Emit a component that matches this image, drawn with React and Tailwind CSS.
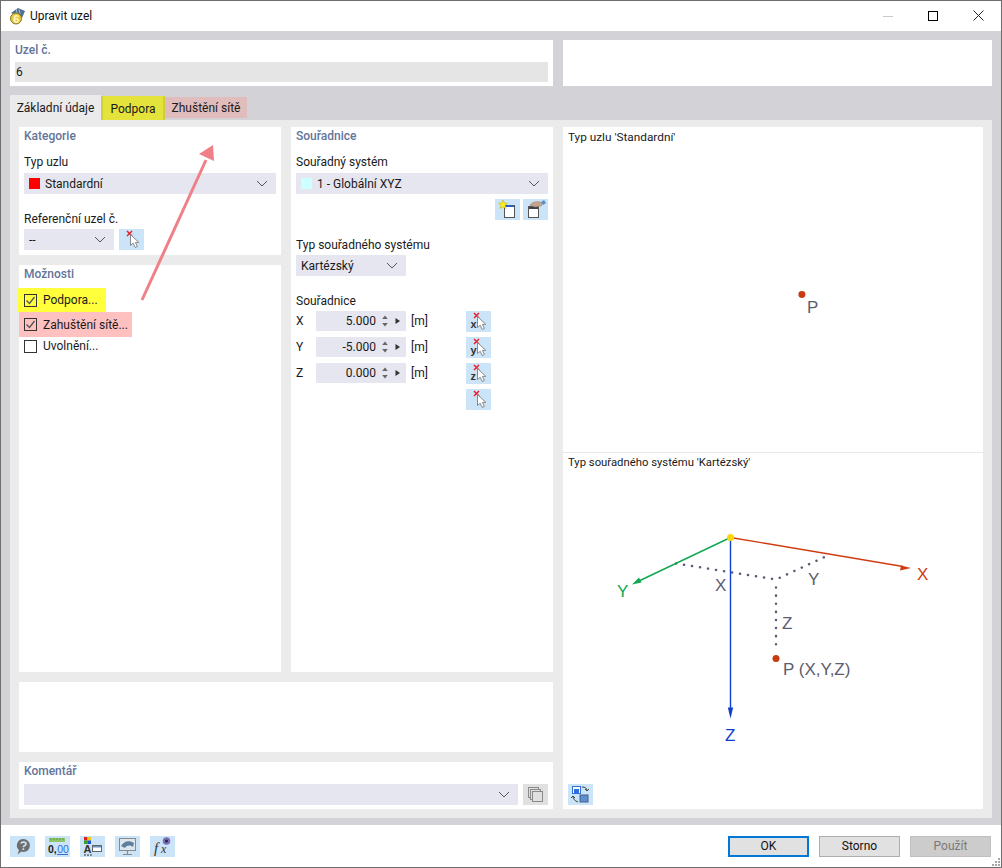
const FONT = "font-['Roboto','Noto_Sans',sans-serif]"

function Chevron({ className = "" }) {
   return (
      <svg width="12" height="7" viewBox="0 0 12 7" className={className}>
         <path d="M1 1l5 5 5-5" fill="none" stroke="#555" strokeWidth="1" />
      </svg>
   )
}

function Title({ children }) {
   return <div className="text-[12px] leading-[16px] font-medium text-[#64749a]">{children}</div>
}

function Label({ children, className = "" }) {
   return <div className={`text-[12px] leading-[16px] text-[#1a1a1a] ${className}`}>{children}</div>
}

function Select({ children, className = "" }) {
   return (
      <div className={`flex h-[21px] items-center justify-between bg-[#e6e6f0] pr-[8px] pl-[5px] text-[12px] text-[#1a1a1a] ${className}`}>
         <div className="flex items-center">{children}</div>
         <Chevron />
      </div>
   )
}

function IconBtn({ children, className = "", gray = false }) {
   return (
      <div className={`flex h-[21px] w-[25px] shrink-0 items-center justify-center ${gray ? "bg-[#e0e0e0]" : "bg-[#cce4f7]"} ${className}`}>
         {children}
      </div>
   )
}

// red cross with the white picking cursor, optional axis letter beside it
function PickIcon({ letter }) {
   return (
      <svg width="25" height="21" viewBox="0 0 25 21">
         <path d="M8 2l5 5M13 2l-5 5" stroke="#e8202c" strokeWidth="1.500" />
         <path d="M11.500 5.500v11l2.700-2.300 2 4.300 2.200-1-2-4.100h3.400z" fill="#fff" stroke="#8a8a8a" strokeWidth="1" />
         {letter && (
            <text x="4.500" y="17" fontSize="11" fontWeight="700" fill="#333" fontFamily="Liberation Sans">
               {letter}
            </text>
         )}
      </svg>
   )
}

function NewWindowIcon() {
   return (
      <svg width="25" height="21" viewBox="0 0 25 21">
         <rect x="9.500" y="6.500" width="10" height="12" fill="#fff" stroke="#555" />
         <rect x="10" y="6" width="9" height="2" fill="#2a5fc0" />
         <path d="M8 1l1.300 3 3.200.3-2.400 2.100.8 3.100L8 7.900 5.100 9.500l.8-3.100-2.400-2.100 3.200-.3z" fill="#ffee20" stroke="#b8a800" strokeWidth=".5" />
      </svg>
   )
}

function EditWindowIcon() {
   return (
      <svg width="25" height="21" viewBox="0 0 25 21">
         <rect x="5.500" y="7.500" width="10" height="11" fill="#fff" stroke="#555" />
         <rect x="6" y="8" width="9" height="2" fill="#444" />
         <path d="M7 6c2-3 6-4 10-3l3 1-2 3-6 1z" fill="#c9a48c" stroke="#8f7a70" strokeWidth=".5" />
         <path d="M18 3l3-2 2 3-3 2z" fill="#5b8fd0" />
      </svg>
   )
}

function Checkbox({ checked }) {
   return (
      <div className="flex h-[13px] w-[13px] shrink-0 items-center justify-center border border-[#333]">
         {checked && (
            <svg width="11" height="11" viewBox="0 0 11 11">
               <path d="M1.500 5.500l3 3 5-6.500" fill="none" stroke="#555" strokeWidth="1.300" />
            </svg>
         )}
      </div>
   )
}

function CoordRow({ axis, value, letter }) {
   return (
      <div className="flex h-[26px] text-[12px] text-[#1a1a1a]">
         <div className="w-[20px] leading-[21px]">{axis}</div>
         <div className="flex h-[20px] w-[90px] items-center bg-[#e6e6f0]">
            <div className="w-[60px] text-right">{value}</div>
            <svg width="30" height="20" viewBox="0 0 30 20">
               <path d="M9 4.500l2.800 3.500H6.200zM9 15.500L11.800 12H6.200z" fill="#666" />
               <path d="M19.500 7l4.500 3-4.500 3z" fill="#333" />
            </svg>
         </div>
         <div className="ml-[5px] w-[55px] leading-[21px]">[m]</div>
         <IconBtn>
            <PickIcon letter={letter} />
         </IconBtn>
      </div>
   )
}

function Footer() {
   return (
      <div className="relative flex h-[42px] shrink-0 items-center justify-between bg-white pr-[10px] pl-[9px] text-[12px]">
         <div className="flex gap-[10px]">
            <IconBtn>
               <svg width="25" height="21" viewBox="0 0 25 21">
                  <path d="M13.500 3a6.500 6.500 0 0 1 1.500 12.800c-1.500.3-3 0-3.500-.3L7.500 18.500l1.500-4.200A6.500 6.500 0 0 1 13.500 3z" fill="#6e6e6e" />
                  <path d="M11 7.500c.5-2 5-2 5 .4 0 1.800-2.700 1.600-2.700 3.400" fill="none" stroke="#cce4f7" strokeWidth="1.700" />
                  <rect x="12.500" y="12.300" width="1.700" height="1.700" fill="#cce4f7" />
               </svg>
            </IconBtn>
            <IconBtn>
               <svg width="25" height="21" viewBox="0 0 25 21">
                  <rect x="4" y="2" width="16" height="4" fill="#8cc76a" />
                  <path d="M6 2v2M9 2v2M12 2v2M15 2v2M18 2v2" stroke="#5f9a48" />
                  <text x="3" y="16.500" fontSize="10.500" fontFamily="Liberation Sans" fontWeight="700" fill="#222">0,</text>
                  <text x="12.200" y="16.500" fontSize="10.500" fontFamily="Liberation Sans" fill="#2f6fdc">00</text>
                  <path d="M12 18.500h11" stroke="#2f6fdc" />
               </svg>
            </IconBtn>
            <IconBtn>
               <svg width="25" height="21" viewBox="0 0 25 21">
                  <rect x="4" y="1" width="3.500" height="3.500" fill="#e02020" />
                  <rect x="7.500" y="1" width="3.500" height="3.500" fill="#e8c820" />
                  <rect x="4" y="4.500" width="3.500" height="3.500" fill="#30a030" />
                  <rect x="7.500" y="4.500" width="3.500" height="3.500" fill="#2050d0" />
                  <text x="3.500" y="17" fontSize="11" fontWeight="700" fontFamily="Liberation Sans" fill="#333">A</text>
                  <path d="M4 19h8" stroke="#333" strokeDasharray="2 1" />
                  <rect x="12.500" y="9.500" width="9" height="6" fill="#fff" stroke="#666" />
                  <rect x="13" y="10" width="8" height="1.500" fill="#6b8fc0" />
               </svg>
            </IconBtn>
            <IconBtn>
               <svg width="25" height="21" viewBox="0 0 25 21">
                  <rect x="4.500" y="2.500" width="16" height="12" fill="#dfe7ee" stroke="#8a8a8a" />
                  <path d="M6 10c3-5 8-6 13-3l-1 4c-3-2-6-2-8 1z" fill="#5f7f9f" />
                  <path d="M12.500 15v3M8 18.500h9" stroke="#8a8a8a" strokeWidth="1.200" />
               </svg>
            </IconBtn>
            <IconBtn>
               <svg width="25" height="21" viewBox="0 0 25 21">
                  <text x="4" y="17" fontSize="15" fontStyle="italic" fontFamily="Liberation Serif" fill="#333">f</text>
                  <text x="11" y="17" fontSize="12" fontStyle="italic" fontFamily="Liberation Serif" fill="#333">x</text>
                  <circle cx="16.500" cy="5" r="3.800" fill="#7a6fb0" />
                  <circle cx="16.500" cy="5" r="1.500" fill="#23235a" />
               </svg>
            </IconBtn>
         </div>
         <div className="flex gap-[10px]">
            <div className="flex h-[21px] w-[81px] items-center justify-center border-2 border-[#0078d7] bg-[#e1e1e1] text-[#111]">OK</div>
            <div className="flex h-[21px] w-[81px] items-center justify-center border border-[#adadad] bg-[#e1e1e1] text-[#111]">Storno</div>
            <div className="flex h-[21px] w-[81px] items-center justify-center border border-[#bfbfbf] bg-[#cccccc] text-[#7a7a7a]">Použít</div>
         </div>
         <svg width="10" height="10" viewBox="0 0 10 10" className="absolute right-0 bottom-0">
            <path d="M7 1h2v2H7zM4 4h2v2H4zM7 4h2v2H7zM1 7h2v2H1zM4 7h2v2H4zM7 7h2v2H7z" fill="#a8a8a8" />
         </svg>
      </div>
   )
}

export default function App() {
   return (
      <div className={`relative flex h-[868px] w-[1002px] flex-col overflow-hidden border border-[#6e6e6e] bg-white ${FONT}`}>
         {/* title bar */}
         <div className="flex h-[30px] shrink-0 items-center bg-white pl-[8px] text-[12px] text-[#111]">
            <svg width="17" height="18" viewBox="0 0 17 18">
               <path d="M2 6l7-5 7 3-3 7z" fill="#4f7096" />
               <path d="M7 2l1 4M10 2.500l1 4" stroke="#a8c0d8" />
               <circle cx="7" cy="11.500" r="5.500" fill="#e8c83c" stroke="#8a7420" />
               <text x="4.200" y="15.500" fontSize="11" fontWeight="700" fontFamily="Liberation Sans" fill="#fff8d0">6</text>
            </svg>
            <span className="ml-[4px]">Upravit uzel</span>
            <div className="ml-auto flex items-center">
               <div className="h-px w-[10px] bg-[#c8c8c8]" />
               <div className="ml-[35px] h-[10px] w-[10px] border border-black" />
               <svg width="11" height="11" viewBox="0 0 11 11" className="mt-[-1px] mr-[17px] ml-[35px]">
                  <path d="M.5.5l10 10M10.500.5l-10 10" stroke="#222" strokeWidth="1" />
               </svg>
            </div>
         </div>

         {/* dialog body */}
         <div className="flex min-h-0 flex-1 flex-col bg-[#d2d2d7] px-[9px] pt-[9px] pb-[7px]">
            <div className="flex h-[46px] shrink-0 gap-[10px]">
               <div className="w-[543px] bg-white px-[5px] pt-[2px]">
                  <Title>Uzel č.</Title>
                  <div className="mt-[4px] flex h-[20px] items-center bg-[#e5e5e5] pl-[1px] text-[12px] text-[#1a1a1a]">6</div>
               </div>
               <div className="flex-1 bg-white" />
            </div>

            {/* tabs */}
            <div className="mt-[9px] flex h-[25px] shrink-0 text-[12px] text-[#1a1a1a]">
               <div className="flex w-[91px] items-center justify-center bg-[#ebebeb]">Základní údaje</div>
               <div className="mt-px flex h-[25px] w-[64px] items-center justify-center border-x-2 border-x-[#cfcf3a] bg-[#e3e33c]">Podpora</div>
               <div className="mt-[2px] flex h-[21px] w-[82px] items-center justify-center bg-[#e0bcbc]">Zhuštění sítě</div>
            </div>

            <div className="flex min-h-0 flex-1 gap-[10px] bg-[#ebebeb] px-[9px] pt-[7px] pb-[9px]">
               <div className="flex w-[534px] flex-col gap-[10px]">
                  <div className="flex min-h-0 flex-1 gap-[10px]">
                     <div className="flex w-[262px] flex-col gap-[10px]">
                        <div className="h-[128px] bg-white px-[5px] pt-px">
                           <Title>Kategorie</Title>
                           <Label className="mt-[10px]">Typ uzlu</Label>
                           <Select className="mt-[3px]">
                              <div className="mr-[5px] h-[11px] w-[11px] bg-[#ff0000]" />
                              Standardní
                           </Select>
                           <Label className="mt-[17px]">Referenční uzel č.</Label>
                           <div className="mt-[2px] flex gap-[5px]">
                              <Select className="w-[90px]">--</Select>
                              <IconBtn>
                                 <PickIcon />
                              </IconBtn>
                           </div>
                        </div>
                        <div className="flex-1 bg-white pt-px">
                           <div className="px-[5px]">
                              <Title>Možnosti</Title>
                           </div>
                           <div className="mt-[6px] -ml-[2px] flex h-[24px] w-[89px] items-center gap-[6px] bg-[#ffff3c] pl-[7px] text-[12px] text-[#1a1a1a]">
                              <Checkbox checked />
                              Podpora...
                           </div>
                           <div className="flex h-[25px] w-[113px] items-center gap-[6px] bg-[#ffc0c0] pl-[5px] text-[12px] text-[#1a1a1a]">
                              <Checkbox checked />
                              Zahuštění sítě...
                           </div>
                           <div className="flex h-[18px] items-center gap-[6px] pl-[5px] text-[12px] text-[#1a1a1a]">
                              <Checkbox />
                              Uvolnění...
                           </div>
                        </div>
                     </div>

                     <div className="w-[262px] bg-white px-[5px] pt-px">
                        <Title>Souřadnice</Title>
                        <Label className="mt-[10px]">Souřadný systém</Label>
                        <Select className="mt-[3px]">
                           <div className="mr-[5px] h-[11px] w-[11px] bg-[#ccffff]" />
                           1 - Globální XYZ
                        </Select>
                        <div className="mt-[5px] flex justify-end gap-[3px]">
                           <IconBtn>
                              <NewWindowIcon />
                           </IconBtn>
                           <IconBtn>
                              <EditWindowIcon />
                           </IconBtn>
                        </div>
                        <Label className="mt-[17px]">Typ souřadného systému</Label>
                        <Select className="mt-[2px] w-[110px]">Kartézský</Select>
                        <Label className="mt-[17px]">Souřadnice</Label>
                        <div className="mt-[2px]">
                           <CoordRow axis="X" value="5.000" letter="x" />
                           <CoordRow axis="Y" value="-5.000" letter="y" />
                           <CoordRow axis="Z" value="0.000" letter="z" />
                        </div>
                        <div className="ml-[170px]">
                           <IconBtn>
                              <PickIcon />
                           </IconBtn>
                        </div>
                     </div>
                  </div>

                  <div className="h-[70px] shrink-0 bg-white" />

                  <div className="h-[47px] shrink-0 bg-white px-[5px] pt-px">
                     <Title>Komentář</Title>
                     <div className="mt-[5px] flex gap-[5px]">
                        <Select className="flex-1" />
                        <IconBtn gray>
                           <svg width="25" height="21" viewBox="0 0 25 21">
                              <rect x="5.500" y="3.500" width="10" height="10" fill="#e0e0e0" stroke="#8a8a8a" />
                              <rect x="7.500" y="5.500" width="10" height="10" fill="#e0e0e0" stroke="#8a8a8a" />
                              <rect x="9.500" y="7.500" width="10" height="10" fill="#e0e0e0" stroke="#8a8a8a" />
                           </svg>
                        </IconBtn>
                     </div>
                  </div>
               </div>

               {/* preview panel */}
               <div className="flex min-w-0 flex-1 flex-col bg-white">
                  <div className="relative h-[326px] shrink-0 border-b border-[#e8e8e8] px-[5px] pt-[2px] text-[11.8px] leading-[16px] text-[#1a1a1a]">
                     Typ uzlu 'Standardní'
                     <svg viewBox="563 127 420 326" className="absolute inset-0 h-full w-full">
                        <circle cx="802" cy="295" r="3.500" fill="#c83a10" />
                        <text x="807" y="314" fontSize="17" fontFamily="Liberation Sans" fill="#5c5c70">P</text>
                     </svg>
                  </div>
                  <div className="relative min-h-0 flex-1 px-[5px] pt-[2px] text-[11.3px] leading-[16px] text-[#1a1a1a]">
                     Typ souřadného systému 'Kartézský'
                     <svg viewBox="563 454 420 355" className="absolute inset-0 h-full w-full">
                        <g fill="none" stroke="#5c5c70" strokeWidth="2.500" strokeLinecap="round" strokeDasharray="0.1 8">
                           <path d="M676 564L776 580L830 555" />
                           <path d="M776 588V652" />
                        </g>
                        <path d="M730.500 538L903 567" stroke="#d03c10" strokeWidth="1.400" />
                        <path d="M911 568.500l-11 2.500 1-5z" fill="#d03c10" />
                        <path d="M730.500 538L640 581" stroke="#10a850" strokeWidth="1.400" />
                        <path d="M632 585l7-7 2.500 5z" fill="#10a850" />
                        <path d="M730.500 538V710" stroke="#1040d0" strokeWidth="1.400" />
                        <path d="M730.500 719l-2.700-11h5.400z" fill="#1040d0" />
                        <circle cx="730.500" cy="538" r="3.500" fill="#f8d808" />
                        <circle cx="776" cy="659" r="3.500" fill="#c83a10" />
                        <g fontFamily="Liberation Sans" fontSize="17">
                           <text x="917" y="580" fill="#d03c10">X</text>
                           <text x="617" y="597" fill="#10a850">Y</text>
                           <text x="725" y="741" fill="#1040d0">Z</text>
                           <g fill="#5c5c70">
                              <text x="715" y="591">X</text>
                              <text x="808" y="585">Y</text>
                              <text x="782" y="629">Z</text>
                              <text x="783" y="675">P (X,Y,Z)</text>
                           </g>
                        </g>
                     </svg>
                     <IconBtn className="absolute bottom-[4px] left-[5px]">
                        <svg width="25" height="21" viewBox="0 0 25 21">
                           <rect x="4.500" y="2.500" width="8" height="7" fill="#fff" stroke="#2f6fdc" />
                           <rect x="6" y="5" width="5" height="4" fill="#2f6fdc" />
                           <path d="M14 3c3 0 5 1 5 4M17 5l2 2 2-2M5 12c0 3 2 5 5 6M3 14l2-2 2 2" fill="none" stroke="#444" />
                           <rect x="12" y="11" width="8" height="7" fill="#5f8fd0" stroke="#44608a" />
                        </svg>
                     </IconBtn>
                  </div>
               </div>
            </div>
         </div>

         <Footer />

         {/* annotation arrow */}
         <svg viewBox="0 0 1002 868" className="pointer-events-none absolute top-[-1px] left-[-1px] h-[868px] w-[1002px]">
            <path d="M142 300L206 160" stroke="#f08088" strokeWidth="3" />
            <path d="M213 145L214 161L199 154z" fill="#f08088" />
         </svg>
      </div>
   )
}
